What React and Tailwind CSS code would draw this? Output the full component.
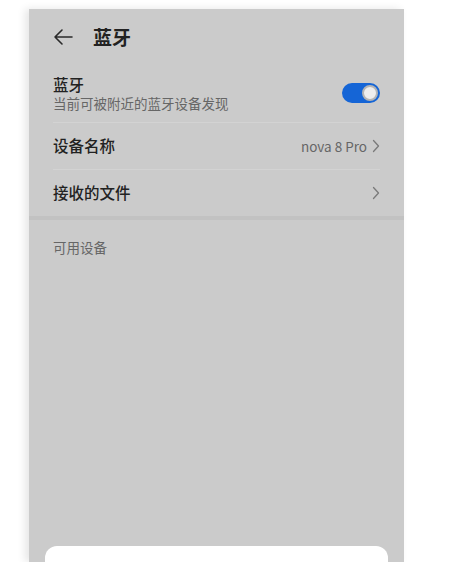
import React from 'react';

const font = { fontFamily: '"Noto Sans CJK SC", "Noto Sans", sans-serif' };

const Chevron = () => (
    <svg width="8" height="14" viewBox="0 0 8 14" fill="none" className="ml-[5px]">
        <path d="M1.5 1.5 L6.5 7 L1.5 12.5" stroke="#7a7a7a" strokeWidth="1.3" strokeLinecap="round" strokeLinejoin="round" />
    </svg>
);

const Divider = () => <div className="mx-6 h-px bg-[#d3d3d3]" />;

export default function App() {
    return (
        <div className="w-[475px] h-[562px] bg-white overflow-hidden" style={font}>
            <div className="ml-[29px] mt-[9px] w-[375px] h-[553px] bg-[#cbcbcb] flex flex-col shadow-[-4px_0_8px_rgba(0,0,0,0.10)]">
                {/* Header */}
                <div className="h-[56px] flex items-center px-6 gap-5">
                    <svg width="20" height="18" viewBox="0 0 20 18" fill="none">
                        <path d="M9 2 L2 9 L9 16 M2 9 H19" stroke="#2a2a2a" strokeWidth="1.6" strokeLinecap="round" strokeLinejoin="round" />
                    </svg>
                    <span className="text-[19px] leading-6 font-bold text-[#222]">蓝牙</span>
                </div>

                {/* Bluetooth toggle */}
                <div className="px-6 pt-[9px] pb-[10px] flex items-center">
                    <div className="flex-1">
                        <p className="text-[15.5px] leading-5 font-medium text-[#222]">蓝牙</p>
                        <p className="text-[13.5px] leading-[18px] text-[#666]">当前可被附近的蓝牙设备发现</p>
                    </div>
                    <div className="w-[38px] h-[20px] rounded-full bg-[#1565d6] flex items-center justify-end pr-[2px]">
                        <div className="w-[16px] h-[16px] rounded-full bg-[#eeeeee] border-2 border-[#b5b5b5]" />
                    </div>
                </div>
                <Divider />

                <div className="h-[46px] px-6 flex items-center">
                    <span className="flex-1 text-[15.5px] font-medium text-[#222]">设备名称</span>
                    <span className="text-[13.5px] text-[#666]">nova 8 Pro</span>
                    <Chevron />
                </div>
                <Divider />

                <div className="h-[46px] px-6 flex items-center">
                    <span className="flex-1 text-[15.5px] font-medium text-[#222]">接收的文件</span>
                    <Chevron />
                </div>
                <div className="h-[4px] bg-[#c2c2c2]" />

                <div className="px-6 pt-[18px]">
                    <p className="text-[13.5px] leading-[18px] text-[#666]">可用设备</p>
                </div>

                <div className="flex-1" />
                <div className="mx-4 h-[16px] bg-white rounded-t-[12px]" />
            </div>
        </div>
    );
}
